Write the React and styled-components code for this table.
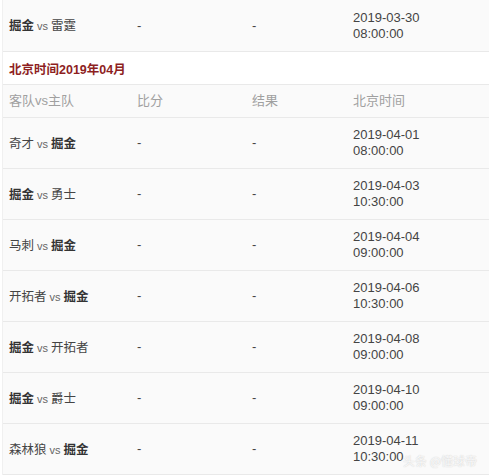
import React from "react";
import styled, { createGlobalStyle } from "styled-components";

const Global = createGlobalStyle`
  html, body { margin: 0; padding: 0; background: #fff; }
  body { font-family: "Liberation Sans", "Noto Sans CJK SC", sans-serif; }
`;

const Page = styled.div`
  position: relative;
  width: 489px;
  height: 475px;
  overflow: hidden;
  background: #fff;
`;

const Table = styled.div`
  margin-left: 2px;
  border-left: 1px solid #f0f0f0;
  display: flex;
  flex-direction: column;
`;

const Row = styled.div`
  display: grid;
  grid-template-columns: 128px 115px 101px 1fr;
  align-items: center;
  height: ${(p) => p.$h}px;
  background: ${(p) => (p.$white ? "#fff" : "#fafafa")};
  border-bottom: 1px solid #e9e9e9;
  box-sizing: content-box;
`;

const Cell = styled.div`
  padding-left: 6px;
  font-size: 13px;
  line-height: 16px;
  color: ${(p) => (p.$muted ? "#a0a0a0" : "#444")};
  font-family: "Liberation Sans", "Noto Sans CJK SC", sans-serif;
`;

const Team = styled.span`
  font-family: "Noto Sans CJK SC", sans-serif;
  font-size: 12.5px;
  font-weight: ${(p) => (p.$bold ? 700 : 400)};
  color: ${(p) => (p.$bold ? "#333" : "#444")};
`;

const Vs = styled.span`
  font-size: 11px;
  color: #666;
  margin: 0 3px;
`;

const Section = styled.div`
  display: flex;
  align-items: center;
  height: 32px;
  padding-left: 6px;
  background: #fff;
  border-bottom: 1px solid #e9e9e9;
  font-family: "Liberation Sans", "Noto Sans CJK SC", sans-serif;
  font-weight: 700;
  font-size: 12.5px;
  color: #8e1f1f;
`;

const Watermark = styled.div`
  position: absolute;
  right: 12px;
  bottom: 6px;
  white-space: nowrap;
  font-family: "Noto Sans CJK SC", sans-serif;
  font-size: 12px;
  color: rgba(255, 255, 255, 0.85);
  text-shadow: 0 0 1px rgba(0, 0, 0, 0.16), 0 0 2px rgba(0, 0, 0, 0.08);
`;

const name = (t) => <Team $bold={t === "掘金"}>{t}</Team>;

const Match = ({ away, home, date, time, h = 50 }) => (
  <Row $h={h}>
    <Cell>
      {name(away)}
      <Vs>vs</Vs>
      {name(home)}
    </Cell>
    <Cell>-</Cell>
    <Cell>-</Cell>
    <Cell>
      {date}
      <br />
      {time}
    </Cell>
  </Row>
);

const april = [
  ["奇才", "掘金", "2019-04-01", "08:00:00"],
  ["掘金", "勇士", "2019-04-03", "10:30:00"],
  ["马刺", "掘金", "2019-04-04", "09:00:00"],
  ["开拓者", "掘金", "2019-04-06", "10:30:00"],
  ["掘金", "开拓者", "2019-04-08", "09:00:00"],
  ["掘金", "爵士", "2019-04-10", "09:00:00"],
  ["森林狼", "掘金", "2019-04-11", "10:30:00"],
];

export default function App() {
  return (
    <Page>
      <Global />
      <Table>
        <Match away="掘金" home="雷霆" date="2019-03-30" time="08:00:00" h={51} />
        <Section>北京时间2019年04月</Section>
        <Row $h={32}>
          <Cell $muted>客队vs主队</Cell>
          <Cell $muted>比分</Cell>
          <Cell $muted>结果</Cell>
          <Cell $muted>北京时间</Cell>
        </Row>
        {april.map(([a, h, d, t]) => (
          <Match key={d} away={a} home={h} date={d} time={t} />
        ))}
      </Table>
      <Watermark>头条 @懂球帝</Watermark>
    </Page>
  );
}
